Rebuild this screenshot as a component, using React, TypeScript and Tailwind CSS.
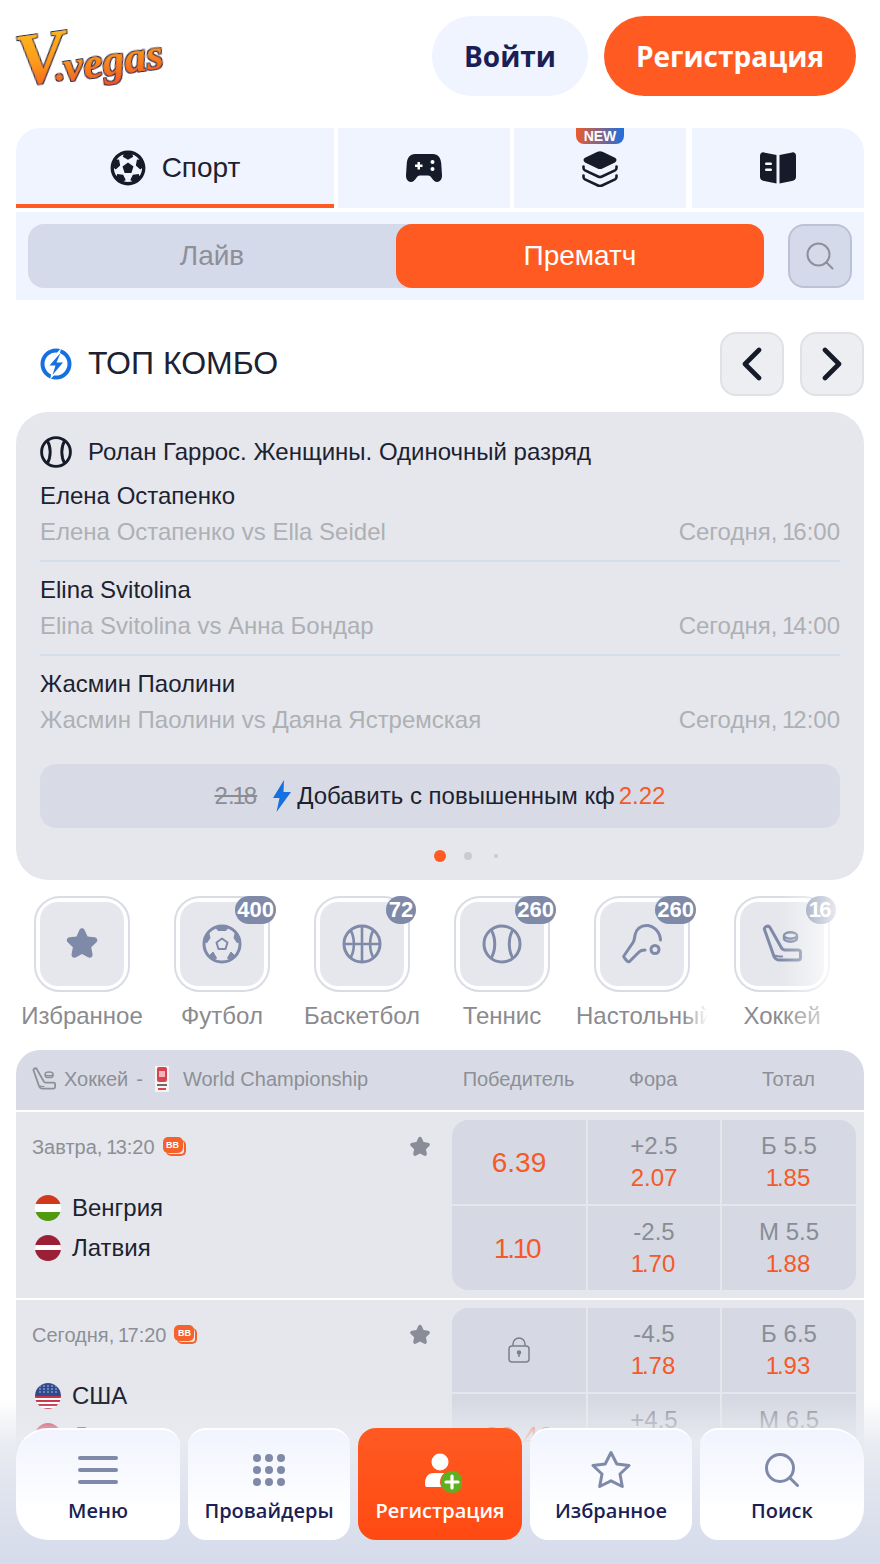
import type { ReactNode } from "react";
import { FaFutbol } from "react-icons/fa";

const sans = "font-['Liberation_Sans',Arial,sans-serif]";
const ui = "font-['Open_Sans','Noto_Sans',sans-serif]";

// the "1" is proportional in the picture, Liberation's is tabular
function Num({ text }: { text: string }) {
  return (
    <>
      {text.split(/(1)/).map((part, i) =>
        part === "1" ? (
          <span key={i} className="-mx-[0.085em]">
            1
          </span>
        ) : (
          part
        )
      )}
    </>
  );
}

function Gamepad() {
  return (
    <svg viewBox="0 0 36 28" className="w-[36px] h-[28px]">
      <path
        d="M9 0h18c5 0 7.500 3.500 8.200 9l.8 12c.2 4.500-2 7-4.800 7-2.500 0-4-1.800-5.500-4-1-1.500-1.800-2.500-3.700-2.500h-8c-1.900 0-2.700 1-3.700 2.500-1.500 2.200-3 4-5.500 4C2 28-.2 25.500 0 21L.8 9C1.500 3.500 4 0 9 0z"
        fill="#151b28"
      />
      <path d="M9 10.500h2.500V8h2.500v2.500h2.500V13H14v2.500h-2.500V13H9z" fill="#fff" />
      <circle cx="26.500" cy="8" r="2" fill="#fff" />
      <circle cx="26.500" cy="15" r="2" fill="#fff" />
    </svg>
  );
}

function Layers() {
  return (
    <svg viewBox="0 0 36 36" className="w-[36px] h-[36px]">
      <path d="M15.500.8c1.600-.8 3.400-.8 5 0l12.500 6c2 1 2 3.600 0 4.600l-12.500 6c-1.600.8-3.400.8-5 0L3 11.400c-2-1-2-3.600 0-4.600z" fill="#151b28" />
      <path d="M1.500 15.500v1.500c0 1 .6 1.800 1.500 2.300l13 6.200c1.300.6 2.700.6 4 0l13-6.200c.9-.5 1.500-1.300 1.500-2.300v-1.500" fill="none" stroke="#151b28" strokeWidth="2.600" strokeLinecap="round" />
      <path d="M1.500 24.500V26c0 1 .6 1.800 1.500 2.300l13 6.200c1.300.6 2.700.6 4 0l13-6.200c.9-.5 1.500-1.300 1.500-2.300v-1.500" fill="none" stroke="#151b28" strokeWidth="2.600" strokeLinecap="round" />
    </svg>
  );
}

function Book() {
  return (
    <svg viewBox="0 0 36 32" className="w-[36px] h-[32px]">
      <path d="M16.500 3v28.500L3 28.700c-1.800-.4-3-1.800-3-3.600V3.500C0 1.500 1.800 0 3.800.4z" fill="#151b28" />
      <path d="M19.500 3v28.500L33 28.700c1.800-.4 3-1.800 3-3.600V3.500C36 1.500 34.200 0 32.200.4z" fill="#151b28" />
      <rect x="5" y="10.500" width="7" height="2.500" rx="1.200" fill="#fff" />
      <rect x="5" y="16.500" width="7" height="2.500" rx="1.200" fill="#fff" />
    </svg>
  );
}

function TennisBall({ color, width, className }: { color: string; width: number; className: string }) {
  return (
    <svg viewBox="0 0 40 40" className={className} fill="none" stroke={color} strokeWidth={width}>
      <circle cx="20" cy="20" r="18" />
      <path d="M9 5.500c5 8.500 5 20.500 0 29" />
      <path d="M31 5.500c-5 8.500-5 20.500 0 29" />
    </svg>
  );
}

function Hockey({ className, color }: { className: string; color: string }) {
  return (
    <svg viewBox="0 0 40 40" className={className} fill="none" stroke={color} strokeWidth="3" strokeLinejoin="round">
      <path d="M2.500 5.500C1.500 3.500 6 .5 8 3.500l11 19.500c1 2 2 3 4 3h13c1.500 0 2.500 1 2.500 2.500v5c0 1.500-1 2.500-2.500 2.500H18c-3 0-5-1-6-3.500z" />
      <path d="M13 31.500c2 1 3 1 5 1h3" strokeWidth="2" />
      <ellipse cx="28.500" cy="11.500" rx="6.500" ry="3.200" strokeWidth="2.400" />
      <path d="M22 12v2.500c0 1.800 3 3.200 6.500 3.200s6.500-1.400 6.500-3.200V12" strokeWidth="2.400" />
    </svg>
  );
}

function Paddle() {
  return (
    <svg viewBox="0 0 40 40" className="w-[40px] h-[40px]" fill="none" stroke="#7f8aa9" strokeWidth="3" strokeLinejoin="round" strokeLinecap="round">
      <path d="M38.500 16c-.5-8-6.500-14.500-14-14.500-6 0-10.500 4-11.500 9.500-.5 3-.5 5-2 7.500L2.500 31c-1 1-1 2 0 3l2.500 3c1 1 2.200 1 3 0l9-9c1.500-1.500 3.500-2 6-2" />
      <circle cx="33" cy="25.500" r="4" />
    </svg>
  );
}

function BallIcon() {
  return (
    <svg viewBox="0 0 40 40" className="w-[40px] h-[40px]" fill="none" stroke="#7f8aa9" strokeWidth="3" strokeLinejoin="round">
      <circle cx="20" cy="20" r="18" />
      <path d="M20 14.500l5.500 4-2 6.500h-7l-2-6.500z" strokeWidth="2" />
      <path d="M13.500 3l2.500 3.500h8L26.500 3z" fill="#7f8aa9" strokeWidth="1" />
      <path d="M6.500 8l1.500 6-3.500 5L2.500 17z" fill="#7f8aa9" strokeWidth="1" />
      <path d="M33.500 8L32 14l3.500 5 2-2z" fill="#7f8aa9" strokeWidth="1" />
      <path d="M7.500 31.500L12.500 36l2-2-3.500-6z" fill="#7f8aa9" strokeWidth="1" />
      <path d="M32.500 31.500L27.500 36l-2-2 3.500-6z" fill="#7f8aa9" strokeWidth="1" />
    </svg>
  );
}

function BasketIcon() {
  return (
    <svg viewBox="0 0 40 40" className="w-[40px] h-[40px]" fill="none" stroke="#7f8aa9" strokeWidth="2.600">
      <circle cx="20" cy="20" r="18" strokeWidth="3" />
      <path d="M20 2v36M2 20h36" />
      <path d="M8.500 6c4.500 8 4.500 20 0 28M31.500 6c-4.500 8-4.500 20 0 28" />
    </svg>
  );
}

function Star({ className, color }: { className: string; color: string }) {
  return (
    <svg viewBox="0 0 34 32" className={className}>
      <path
        d="M14.300 2.200c1.200-2.600 4.200-2.600 5.400 0l2.900 6.200 6.800.9c2.900.4 3.900 3.300 1.800 5.300l-5 4.700 1.300 6.700c.5 2.900-2 4.700-4.500 3.300L17 26.100l-5.900 3.200c-2.500 1.400-5-.4-4.500-3.300l1.300-6.700-5-4.700c-2.100-2-1.100-4.900 1.800-5.300l6.800-.9z"
        fill={color}
      />
    </svg>
  );
}

function Chevron({ right }: { right?: boolean }) {
  return (
    <button className="w-16 h-16 rounded-2xl bg-[#eceef2] border-2 border-[#dfe1e7] flex items-center justify-center">
      <svg viewBox="0 0 20 34" className="w-[20px] h-[34px]" fill="none" stroke="#151b28" strokeWidth="4.600" strokeLinecap="round" strokeLinejoin="round">
        <path d={right ? "M3 3l14 14L3 31" : "M17 3L3 17l14 14"} />
      </svg>
    </button>
  );
}

function Flag({ kind }: { kind: string }) {
  let body: ReactNode = null;
  if (kind === "hu") {
    body = (
      <>
        <rect width="26" height="9" fill="#d0391c" />
        <rect y="9" width="26" height="8" fill="#fff" />
        <rect y="17" width="26" height="9" fill="#4f9a0e" />
      </>
    );
  } else if (kind === "lv") {
    body = (
      <>
        <rect width="26" height="26" fill="#9c2035" />
        <rect y="10" width="26" height="5" fill="#fff" />
      </>
    );
  } else if (kind === "us") {
    body = (
      <>
        <rect width="26" height="26" fill="#fff" />
        {[13, 17, 21, 25].map((y) => (
          <rect key={y} y={y} width="26" height="2" fill="#c8334a" />
        ))}
        <rect width="26" height="13" fill="#2f4a8e" />
        {[3, 6, 9].flatMap((y) =>
          [5, 9, 13, 17, 21].map((x) => <circle key={`${x}-${y}`} cx={x} cy={y} r="0.700" fill="#dfe5f5" />)
        )}
      </>
    );
  } else {
    body = <rect width="26" height="26" fill="#c8102e" />;
  }
  return (
    <svg viewBox="0 0 26 26" className="w-[26px] h-[26px] rounded-full shrink-0">
      {body}
    </svg>
  );
}

function BBIcon() {
  return (
    <span className="relative inline-block w-[23px] h-[20px] ml-2">
      <span className="absolute left-[3px] top-[3px] w-[20px] h-[16px] rounded-[5px] border-b-2 border-r-2 border-[#f4622d]" />
      <span className="absolute left-0 top-0 w-[20px] h-[16px] rounded-[5px] bg-[#f4622d] text-white text-[9px] leading-[16px] font-bold text-center">BB</span>
    </span>
  );
}

const combos = [
  { name: "Елена Остапенко", match: "Елена Остапенко vs Ella Seidel", time: "Сегодня, 16:00" },
  { name: "Elina Svitolina", match: "Elina Svitolina vs Анна Бондар", time: "Сегодня, 14:00" },
  { name: "Жасмин Паолини", match: "Жасмин Паолини vs Даяна Ястремская", time: "Сегодня, 12:00" },
];

const sports: { label: string; count?: string; icon: ReactNode; clip?: boolean }[] = [
  { label: "Избранное", icon: <Star className="w-[34px] h-[32px]" color="#7f8aa9" /> },
  { label: "Футбол", count: "400", icon: <BallIcon /> },
  { label: "Баскетбол", count: "72", icon: <BasketIcon /> },
  { label: "Теннис", count: "260", icon: <TennisBall color="#7f8aa9" width={3} className="w-[40px] h-[40px]" /> },
  { label: "Настольный теннис", count: "260", icon: <Paddle />, clip: true },
  { label: "Хоккей", count: "16", icon: <Hockey className="w-[40px] h-[40px]" color="#7f8aa9" /> },
];

type Odd = { top?: string; val?: string; big?: boolean; lock?: boolean };

const matches: { time: string; teams: [string, string][]; odds: Odd[] }[] = [
  {
    time: "Завтра, 13:20",
    teams: [["hu", "Венгрия"], ["lv", "Латвия"]],
    odds: [
      { val: "6.39", big: true },
      { top: "+2.5", val: "2.07" },
      { top: "Б 5.5", val: "1.85" },
      { val: "1.10", big: true },
      { top: "-2.5", val: "1.70" },
      { top: "М 5.5", val: "1.88" },
    ],
  },
  {
    time: "Сегодня, 17:20",
    teams: [["us", "США"], ["dk", "Дания"]],
    odds: [
      { lock: true },
      { top: "-4.5", val: "1.78" },
      { top: "Б 6.5", val: "1.93" },
      { val: "20.40", big: true },
      { top: "+4.5", val: "1.95" },
      { top: "М 6.5", val: "1.80" },
    ],
  },
];

function OddCell({ odd }: { odd: Odd }) {
  return (
    <div className="h-[84px] bg-[#d6d9e3] flex flex-col items-center justify-center">
      {odd.lock && (
        <svg viewBox="0 0 22 26" className="w-[22px] h-[26px]" fill="none" stroke="#7b7f88" strokeWidth="1.500">
          <rect x="1" y="9" width="20" height="16" rx="3" />
          <path d="M5 9V7a6 6 0 0 1 12 0v2" />
          <circle cx="11" cy="15.500" r="1.500" fill="#7b7f88" />
          <path d="M11 16v4" />
        </svg>
      )}
      {odd.top && <div className="text-[24px] leading-[32px] text-[#8a8d96]">{odd.top}</div>}
      {odd.val && (
        <div className={odd.big ? "text-[28px] leading-[32px] pt-[2px] text-[#f4592a]" : "text-[24px] leading-[32px] text-[#f4592a]"}>
          <Num text={odd.val} />
        </div>
      )}
    </div>
  );
}

function Logo() {
  return (
    <svg viewBox="0 0 150 70" className="w-[150px] h-[70px] overflow-visible">
      <defs>
        <linearGradient id="logoFill" x1="0" y1="0" x2="0" y2="1">
          <stop offset="0" stopColor="#ffc21a" />
          <stop offset="0.55" stopColor="#fb9a1c" />
          <stop offset="1" stopColor="#ef4c22" />
        </linearGradient>
        <filter id="logoFat" x="-10%" y="-20%" width="120%" height="140%">
          <feMorphology in="SourceGraphic" operator="dilate" radius="0.400" result="fat" />
          <feMorphology in="SourceAlpha" operator="dilate" radius="1.400" result="edge" />
          <feFlood floodColor="#1d2240" />
          <feComposite in2="edge" operator="in" result="outline" />
          <feMerge>
            <feMergeNode in="outline" />
            <feMergeNode in="fat" />
          </feMerge>
        </filter>
      </defs>
      <g transform="rotate(-8 75 35)" filter="url(#logoFat)">
        <text x="0" y="54" fill="url(#logoFill)" fontFamily="'Liberation Serif', serif" fontStyle="italic" fontWeight="700">
          <tspan fontSize="74">V</tspan>
          <tspan fontSize="40" dx="-12">.</tspan>
          <tspan fontSize="44" dx="-1" dy="2">vegas</tspan>
        </text>
      </g>
    </svg>
  );
}

const navClass = "flex flex-col items-center h-[112px] pt-[24px] bg-[linear-gradient(180deg,#f1f4fe_0%,#ffffff_75%)] border-t-2 border-white";
const navText = `${ui} text-[20px] leading-[28px] font-semibold text-[#1a1f55] mt-auto mb-[15px]`;

export default function App() {
  return (
    <div className={`${sans} relative w-[880px] h-[1564px] overflow-hidden bg-white text-[#1c2230]`}>
      <header className="flex items-start justify-between pl-4 pr-6 pt-4">
        <div className="pt-[6px]">
          <Logo />
        </div>
        <div className={`${ui} flex gap-4 text-[28px] font-bold`}>
          <button className="w-[156px] h-[80px] rounded-full bg-[#f0f4fe] text-[#1a1f55]">Войти</button>
          <button className="w-[252px] h-[80px] rounded-full bg-[#ff5a22] text-white">Регистрация</button>
        </div>
      </header>

      <nav className="flex px-4 mt-8">
        <div className="w-[318px] h-[80px] rounded-tl-[24px] bg-[#f0f4fe] border-b-4 border-[#ff5a22] flex items-center justify-center gap-4 pt-1 text-[28px]">
          <FaFutbol className="w-[36px] h-[36px] text-[#151b28]" />
          <span>Спорт</span>
        </div>
        <div className="ml-1 w-[172px] h-[80px] bg-[#f0f4fe] flex items-center justify-center">
          <Gamepad />
        </div>
        <div className="relative ml-1 w-[172px] h-[80px] bg-[#f0f4fe] flex items-center justify-center pt-[1px]">
          <span className="absolute top-0 left-[62px] w-[48px] h-[16px] rounded-b-[8px] bg-[linear-gradient(90deg,#ec5a2c,#1c6fe0)] text-white text-[14px] leading-[16px] font-bold text-center">NEW</span>
          <Layers />
        </div>
        <div className="ml-[6px] w-[172px] h-[80px] rounded-tr-[24px] bg-[#f0f4fe] flex items-center justify-center">
          <Book />
        </div>
      </nav>

      <div className="mx-4 mt-1 h-[88px] bg-[#f0f4fe] flex items-center pl-3 pr-3">
        <div className="flex w-[736px] h-16 rounded-2xl bg-[#d5daeb] text-[28px]">
          <div className="w-[368px] flex items-center justify-center text-[#8e8f98]">Лайв</div>
          <div className="w-[368px] flex items-center justify-center rounded-2xl bg-[#ff5a22] text-white">Прематч</div>
        </div>
        <button className="ml-6 w-16 h-16 rounded-2xl bg-[#d5daeb] border-2 border-[#bcc2d6] flex items-center justify-center">
          <svg viewBox="0 0 28 28" className="w-[28px] h-[28px]" fill="none" stroke="#8e8f98" strokeWidth="2">
            <circle cx="12.500" cy="12.500" r="11" />
            <path d="M20.500 20.500l6 6" strokeLinecap="round" />
          </svg>
        </button>
      </div>

      <section className="flex items-center justify-between ml-10 mr-4 mt-8">
        <div className="flex items-center gap-4">
          <svg viewBox="0 0 32 32" className="w-[32px] h-[32px]">
            <circle cx="16" cy="16" r="13.500" fill="none" stroke="#1570e0" strokeWidth="4" />
            <path d="M21 0L6 18h7L10 32l16-19h-7.500z" fill="#fff" />
            <path d="M20.500 5L9.500 17.500h6L12.500 27 23 14.500h-6.500z" fill="#1570e0" />
          </svg>
          <h2 className="text-[32px] leading-[40px] font-normal pb-[3px]">ТОП КОМБО</h2>
        </div>
        <div className="flex gap-4">
          <Chevron />
          <Chevron right />
        </div>
      </section>

      <section className="mx-4 mt-4 h-[468px] rounded-[32px] bg-[#e5e7ec] px-6 pt-[24px] text-[24px] leading-[32px]">
        <div className="flex items-center gap-4">
          <TennisBall color="#151b28" width={3.6} className="w-[32px] h-[32px]" />
          <span>Ролан Гаррос. Женщины. Одиночный разряд</span>
        </div>
        <div className="mt-[12px]">
          {combos.map((c, i) => (
            <div key={c.name} className={i < 2 ? "h-[82px] mb-[12px] border-b-2 border-[#d5dfec]" : "h-[64px]"}>
              <div className="h-[32px] leading-[32px]">{c.name}</div>
              <div className="flex justify-between mt-[4px] text-[#aeb0b4]">
                <span>{c.match}</span>
                <span>
                  <Num text={c.time} />
                </span>
              </div>
            </div>
          ))}
        </div>
        <button className="mt-[32px] w-full h-16 rounded-2xl bg-[#d8dbe5] flex items-center justify-center">
          <span className="text-[#8a8d96] line-through">
            <Num text="2.18" />
          </span>
          <svg viewBox="0 0 18 32" className="w-[18px] h-[32px] ml-[16px] mr-[6px]">
            <path d="M11 0L0 18h6.500L3.500 32 18 12h-7.500z" fill="#1570e0" />
          </svg>
          <span>Добавить с повышенным кф</span>
          <span className="ml-[4px] text-[#f4592a]">2.22</span>
        </button>
        <div className="relative h-[12px] mt-[22px]">
          <span className="absolute left-[394px] top-0 w-[12px] h-[12px] rounded-full bg-[#ff5a22]" />
          <span className="absolute left-[424px] top-[2px] w-[8px] h-[8px] rounded-full bg-[#c9cbd1]" />
          <span className="absolute left-[454px] top-[4px] w-[4px] h-[4px] rounded-full bg-[#c9cbd1]" />
        </div>
      </section>

      <section className="relative flex pl-3 mt-4 h-[154px]">
        {sports.map((s) => (
          <div key={s.label} className="w-[140px] shrink-0 flex flex-col items-center">
            <div className="relative w-[96px] h-[96px] rounded-[26px] border-2 border-[#d9dce4] bg-white flex items-center justify-center">
              <div className="w-[84px] h-[84px] rounded-[18px] bg-[#e5e7ec] flex items-center justify-center">{s.icon}</div>
              {s.count && (
                <span className="absolute -top-[2px] -right-[8px] min-w-[30px] h-[28px] px-[2px] rounded-full bg-[#7f8aa9] text-white text-[22px] leading-[28px] font-bold text-center">
                  <Num text={s.count} />
                </span>
              )}
            </div>
            <div className={s.clip ? "relative mt-[4px] w-[132px] h-[40px] overflow-hidden whitespace-nowrap text-[24px] leading-[40px] text-[#8a8b8f]" : "mt-[4px] h-[40px] text-[24px] leading-[40px] text-[#8a8b8f] whitespace-nowrap"}>
              {s.label}
              {s.clip && <span className="absolute right-0 top-0 w-[24px] h-[40px] bg-[linear-gradient(90deg,rgba(255,255,255,0),#ffffff)]" />}
            </div>
          </div>
        ))}
        <div className="absolute right-0 top-0 w-[100px] h-[154px] bg-[linear-gradient(90deg,rgba(255,255,255,0)_0%,rgba(255,255,255,0.8)_55%,rgba(255,255,255,0.9)_100%)]" />
      </section>

      <section className="mx-4">
        <div className="flex items-center h-[60px] pb-[2px] rounded-t-[24px] bg-[#d8dbe5] text-[20px] text-[#8d8f96]">
          <div className="w-[436px] flex items-center pl-4">
            <Hockey className="w-[24px] h-[24px]" color="#8d8f96" />
            <span className="ml-2">Хоккей</span>
            <span className="ml-[8px]">-</span>
            <svg viewBox="0 0 14 26" className="w-[14px] h-[26px] ml-[12px]">
              <rect width="14" height="26" fill="#f4f4f4" />
              <rect x="2" y="1" width="10" height="15" rx="2" fill="#d8434f" />
              <rect x="4" y="5" width="6" height="6" fill="#f0b5ba" />
              <rect x="2" y="18" width="10" height="2" fill="#6b6b6b" />
              <rect x="3" y="22" width="8" height="2" fill="#d8434f" />
            </svg>
            <span className="ml-[14px]">World Championship</span>
          </div>
          <div className="w-[133px] text-center">Победитель</div>
          <div className="ml-[1px] w-[134px] text-center">Фора</div>
          <div className="ml-[1px] w-[135px] text-center">Тотал</div>
        </div>
        {matches.map((m) => (
          <div key={m.time} className="flex h-[186px] mt-[2px] mb-[2px] bg-[#e5e7ec] py-2 pr-2">
            <div className="w-[436px] shrink-0">
              <div className="flex items-center justify-between h-[54px] pl-4 pr-[21px] text-[20px] text-[#8d8f96]">
                <span className="flex items-center">
                  <span>
                    <Num text={m.time} />
                  </span>
                  <BBIcon />
                </span>
                <Star className="w-[22px] h-[22px]" color="#8a8d97" />
              </div>
              <div className="mt-[14px] pl-[19px]">
                {m.teams.map(([flag, name]) => (
                  <div key={name} className="flex items-center gap-[11px] h-[40px] text-[24px]">
                    <Flag kind={flag} />
                    <span>{name}</span>
                  </div>
                ))}
              </div>
            </div>
            <div className="w-[404px] h-[170px] grid grid-cols-[134px_132px_134px] gap-[2px] rounded-2xl overflow-hidden">
              {m.odds.map((o, i) => (
                <OddCell key={i} odd={o} />
              ))}
            </div>
          </div>
        ))}
      </section>

      <div className="absolute left-0 right-0 bottom-0 h-[164px] bg-[linear-gradient(180deg,rgba(238,239,244,0)_0%,rgba(233,235,241,0.92)_25%,#e2e5ef_50%,#d5dbeb_100%)]" />
      <div className="absolute left-4 right-4 bottom-[24px] flex gap-2">
        <div className={`${navClass} w-[164px] rounded-l-[32px] rounded-r-[18px]`}>
          <svg viewBox="0 0 40 28" className="w-[40px] h-[28px] mt-[2px]" fill="#7f8aa9">
            <rect width="40" height="4" rx="2" />
            <rect y="12" width="40" height="4" rx="2" />
            <rect y="24" width="40" height="4" rx="2" />
          </svg>
          <span className={navText}>Меню</span>
        </div>
        <div className={`${navClass} w-[162px] rounded-[18px]`}>
          <svg viewBox="0 0 32 32" className="w-[32px] h-[32px]" fill="#7f8aa9">
            {[4, 16, 28].flatMap((y) =>
              [4, 16, 28].map((x) => <circle key={`${x}-${y}`} cx={x} cy={y} r="4" />)
            )}
          </svg>
          <span className={navText}>Провайдеры</span>
        </div>
        <div className="flex flex-col items-center w-[164px] h-[112px] pt-[24px] rounded-[18px] bg-[linear-gradient(180deg,#ff5a22,#ff4a12)]">
          <svg viewBox="0 0 44 42" className="w-[44px] h-[42px]">
            <circle cx="22" cy="10" r="8.500" fill="#fff" />
            <path d="M7 31c0-6 3.500-10 8.500-10h12c5 0 8 3 8 9v5H9c-1.200 0-2-.8-2-2z" fill="#fff" />
            <circle cx="34" cy="30" r="11.500" fill="#5fb01e" stroke="#ff5420" strokeWidth="1" />
            <path d="M34 24v12M28 30h12" stroke="#fff" strokeWidth="3.200" strokeLinecap="round" />
          </svg>
          <span className={`${ui} text-[20px] leading-[28px] font-semibold text-white mt-auto mb-[15px]`}>Регистрация</span>
        </div>
        <div className={`${navClass} w-[162px] rounded-[18px]`}>
          <svg viewBox="0 0 40 40" className="w-[40px] h-[40px] -mt-[4px]" fill="none" stroke="#7f8aa9" strokeWidth="3" strokeLinejoin="round">
            <path d="M20 2.500l5.800 11.500 12.200 1.500-9 8.500 2.300 12.500L20 30.800 8.700 36.500 11 24l-9-8.500L14.200 14z" />
          </svg>
          <span className={navText}>Избранное</span>
        </div>
        <div className={`${navClass} w-[164px] rounded-l-[18px] rounded-r-[32px]`}>
          <svg viewBox="0 0 34 34" className="w-[34px] h-[34px] -mt-[1px]" fill="none" stroke="#7f8aa9" strokeWidth="3">
            <circle cx="15" cy="15" r="13.500" />
            <path d="M25 25l7.500 7.500" strokeLinecap="round" />
          </svg>
          <span className={navText}>Поиск</span>
        </div>
      </div>
    </div>
  );
}
